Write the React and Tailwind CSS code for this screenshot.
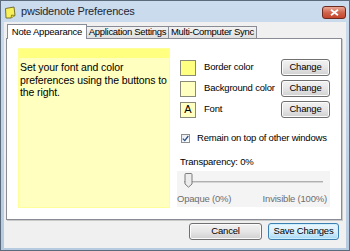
import React from "react";

function Btn({ children, className = "", primary = false }) {
  return (
    <div
      className={
        "h-[17px] flex items-center justify-center rounded-[3px] border text-[9.5px] tracking-[-0.2px] " +
        (primary
          ? "border-[#3c7fb1] bg-gradient-to-b from-[#eaf6fd] via-[#d9f0fc] to-[#a7d9f5] shadow-[inset_0_0_0_1px_#cdeefc] "
          : "border-[#707070] bg-gradient-to-b from-[#f2f2f2] via-[#e6e6e6] to-[#d0d0d0] shadow-[inset_0_0_0_1px_#fbfbfb] ") +
        className
      }
    >
      {children}
    </div>
  );
}

function Row({ swatch, label }) {
  return (
    <div className="flex items-center h-[17px] pl-[3px]">
      {swatch}
      <span className="ml-[8px] text-[9.5px] tracking-[-0.2px]">{label}</span>
      <Btn className="ml-auto w-[49px]">Change</Btn>
    </div>
  );
}

export default function App() {
  return (
    <div className="w-[350px] h-[251px] flex flex-col bg-gradient-to-b from-[#cbdcee] to-[#b6cbe0] border border-[#5b6b7c] font-['Liberation_Sans',Arial,sans-serif] text-black overflow-hidden">
      <div className="h-[21px] shrink-0 flex items-center pl-[3px] pr-[3px]">
        <svg width="12" height="13" viewBox="0 0 12 13" className="mt-[1px]">
          <path d="M1.5 2.5 L10 1 L11 9.5 L7 12 L2 12 Z" fill="#f7f05a" stroke="#6b6425" strokeWidth="0.9" />
          <path d="M7 12 L7.5 9 L11 9.5" fill="#e2d640" stroke="#6b6425" strokeWidth="0.7" />
        </svg>
        <span className="ml-[5px] text-[11px] text-[#1e2733] tracking-[-0.2px]">pwsidenote Preferences</span>
        <div className="ml-auto mt-[1px] w-[24px] h-[13px] rounded-[3px] border border-[#6d2b20] bg-gradient-to-b from-[#e8a796] via-[#d0644c] to-[#c4452c] flex items-center justify-center">
          <svg width="9" height="7" viewBox="0 0 9 7">
            <path d="M1 0.8 L8 6.2 M8 0.8 L1 6.2" stroke="#ffffff" strokeWidth="1.8" />
          </svg>
        </div>
      </div>

      <div className="flex-1 mx-[3px] mb-[2px] bg-[#f0f0f0] flex flex-col pt-[2px] pl-[2px] relative">
        <div className="flex items-end h-[15px] -mb-px relative z-10 pl-[1px]">
          <div className="w-[80px] h-[15px] bg-white border border-b-0 border-[#898c95] flex items-center justify-center text-[9.5px] tracking-[-0.2px]">
            Note Appearance
          </div>
          <div className="w-[82px] h-[12px] mb-px bg-gradient-to-b from-[#f2f2f2] to-[#e0e0e0] border border-b-0 border-l-0 border-[#898c95] flex items-center justify-center text-[9.5px] tracking-[-0.3px]">
            Application Settings
          </div>
          <div className="w-[88px] h-[12px] mb-px bg-gradient-to-b from-[#f2f2f2] to-[#e0e0e0] border border-b-0 border-l-0 border-[#898c95] flex items-center justify-center text-[9.5px] tracking-[-0.3px]">
            Multi-Computer Sync
          </div>
        </div>

        <div className="w-[336px] h-[182px] bg-white border border-[#898c95] shadow-[1px_1px_0_#c9c9c9] flex pl-[11px] pt-[9px]">
          <div className="w-[152px] h-[160px] border border-[#ffff99] bg-[#ffffc0] flex flex-col">
            <div className="h-[9px] bg-[#ffff80]" />
            <p className="pl-[1px] pt-[3px] text-[10.5px] leading-[12.5px] tracking-[-0.1px]">
              Set your font and color preferences using the buttons to the right.
            </p>
          </div>

          <div className="ml-[7px] w-[153px] flex flex-col pt-[11px]">
            <div className="flex flex-col gap-[4px]">
              <Row
                label="Border color"
                swatch={<div className="w-[16px] h-[16px] border border-[#8a8a7a] bg-[#ffff80]" />}
              />
              <Row
                label="Background color"
                swatch={<div className="w-[16px] h-[16px] border border-[#8a8a7a] bg-[#ffffc0]" />}
              />
              <Row
                label="Font"
                swatch={
                  <div className="w-[16px] h-[16px] border border-[#8a8a7a] bg-[#ffffc0] flex items-center justify-center text-[11px] leading-none">
                    A
                  </div>
                }
              />
            </div>

            <div className="flex items-center mt-[13px] pl-[4px]">
              <div className="w-[9px] h-[9px] border border-[#8e8f8f] bg-gradient-to-br from-[#e6eaf0] to-[#ffffff] flex items-center justify-center">
                <svg width="7" height="7" viewBox="0 0 7 7">
                  <path d="M0.8 3.6 L2.8 5.6 L6.3 1" fill="none" stroke="#2a4e86" strokeWidth="1.3" />
                </svg>
              </div>
              <span className="ml-[7px] text-[9.5px] tracking-[-0.2px]">Remain on top of other windows</span>
            </div>

            <div className="mt-[10px] pl-[3px] text-[9.5px] tracking-[-0.2px]">Transparency: 0%</div>

            <div className="mt-[1px] h-[36px] bg-[#f4f4f4] flex flex-col">
              <div className="relative h-[18px] mt-[2px] mx-[7px] flex items-center">
                <div className="w-full h-[2px] bg-[#d6d6d6] border-t border-[#b0b0b0]" />
                <svg width="9" height="15" viewBox="0 0 9 15" className="absolute left-0 top-[0px]">
                  <path d="M1 1.5 Q1 0.5 2 0.5 L7 0.5 Q8 0.5 8 1.5 L8 11 L4.5 14.2 L1 11 Z" fill="#ececec" stroke="#707070" strokeWidth="0.9" />
                </svg>
              </div>
              <div className="flex justify-between text-[9.5px] tracking-[-0.2px] text-[#6e6e6e] mt-[1px] pr-[3px]">
                <span>Opaque (0%)</span>
                <span>Invisible (100%)</span>
              </div>
            </div>
          </div>
        </div>

        <div className="flex justify-end mt-[3px] pr-[7px] gap-[6px]">
          <Btn className="w-[73px]">Cancel</Btn>
          <Btn primary className="w-[71px]">Save Changes</Btn>
        </div>
      </div>
    </div>
  );
}
